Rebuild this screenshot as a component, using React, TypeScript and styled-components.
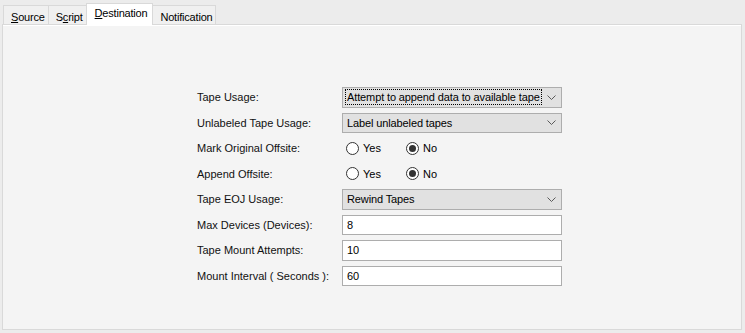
import React from "react";
import styled, { createGlobalStyle } from "styled-components";

const Global = createGlobalStyle`
  html, body { margin: 0; padding: 0; background: #ececec; }
  body { font-family: "Liberation Sans", Arial, sans-serif; font-size: 11px; color: #000; }
  * { box-sizing: border-box; }
`;

const Page = styled.div`
  width: 745px;
  height: 333px;
  padding: 3px 3px 3px 2px;
  display: flex;
  flex-direction: column;
  background: #ececec;
`;

const TabStrip = styled.div`
  display: flex;
  align-items: flex-end;
  height: 21px;
  padding-left: 1px;
  position: relative;
  z-index: 2;
`;

const Tab = styled.div<{ $active?: boolean }>`
  height: ${(p) => (p.$active ? "22px" : "19px")};
  margin-bottom: ${(p) => (p.$active ? "-1px" : "0")};
  padding: ${(p) => (p.$active ? "2px 5px 0 8px" : "4px 3px 0 7px")};
  border: 1px solid #d9d9d9;
  border-bottom: none;
  margin-left: -1px;
  background: ${(p) => (p.$active ? "#ffffff" : "#f0f0f0")};
  font-size: 11px;
  line-height: 14px;
  letter-spacing: -0.2px;
  white-space: nowrap;
  color: #000;
  &:first-child { margin-left: 0; }
`;

const Key = styled.span`
  text-decoration: underline;
  text-underline-offset: 1px;
`;

const Panel = styled.div`
  flex: 1;
  border: 1px solid #d9d9d9;
  background: #f4f4f4;
  box-shadow: inset 0 1px 0 #ffffff;
  padding: 62px 0 0 194px;
`;

const Form = styled.div`
  display: grid;
  grid-template-columns: 145px 220px;
  grid-auto-rows: 20.5px;
  row-gap: 5px;
  align-items: center;
`;

const Label = styled.div`
  font-size: 11px;
  color: #111;
  white-space: nowrap;
`;

const SelectBox = styled.div`
  height: 100%;
  display: flex;
  align-items: center;
  justify-content: space-between;
  padding: 0 4px 0 3px;
  background: #e1e1e1;
  border: 1px solid #adadad;
  font-size: 11px;
  color: #000;
`;

const SelectText = styled.span<{ $focus?: boolean }>`
  padding: 1px 1px;
  outline: ${(p) => (p.$focus ? "1px dotted #000" : "none")};
  letter-spacing: -0.12px;
  white-space: nowrap;
`;

const Chevron = styled.svg`
  width: 9px;
  height: 5px;
  margin-right: 1px;
  flex: none;
`;

const Input = styled.div`
  height: 100%;
  display: flex;
  align-items: center;
  padding: 0 4px;
  background: #ffffff;
  border: 1px solid #adadad;
  font-size: 11px;
  color: #000;
`;

const RadioGroup = styled.div`
  display: flex;
  align-items: center;
  padding-left: 4px;
`;

const RadioItem = styled.label`
  display: flex;
  align-items: center;
  gap: 4px;
  width: 60px;
  font-size: 11px;
  color: #000;
`;

const Circle = styled.span<{ $checked?: boolean }>`
  width: 13px;
  height: 13px;
  border-radius: 50%;
  border: 1px solid #333;
  background: #fff;
  display: flex;
  align-items: center;
  justify-content: center;
  &::after {
    content: "";
    width: 7px;
    height: 7px;
    border-radius: 50%;
    background: ${(p) => (p.$checked ? "#333" : "transparent")};
  }
`;

const Select = ({ value, focus }: { value: string; focus?: boolean }) => (
  <SelectBox>
    <SelectText $focus={focus}>{value}</SelectText>
    <Chevron viewBox="0 0 9 5">
      <path d="M0.5 0.5 L4.5 4.5 L8.5 0.5" fill="none" stroke="#5a5a5a" strokeWidth="1" />
    </Chevron>
  </SelectBox>
);

const Radio = ({ yes }: { yes: boolean }) => (
  <RadioGroup>
    <RadioItem>
      <Circle $checked={yes} />
      Yes
    </RadioItem>
    <RadioItem>
      <Circle $checked={!yes} />
      No
    </RadioItem>
  </RadioGroup>
);

export default function App() {
  return (
    <>
      <Global />
      <Page>
        <TabStrip>
          <Tab><Key>S</Key>ource</Tab>
          <Tab>S<Key>c</Key>ript</Tab>
          <Tab $active><Key>D</Key>estination</Tab>
          <Tab>Notification</Tab>
        </TabStrip>
        <Panel>
          <Form>
            <Label>Tape Usage:</Label>
            <Select value="Attempt to append data to available tape" focus />
            <Label>Unlabeled Tape Usage:</Label>
            <Select value="Label unlabeled tapes" />
            <Label>Mark Original Offsite:</Label>
            <Radio yes={false} />
            <Label>Append Offsite:</Label>
            <Radio yes={false} />
            <Label>Tape EOJ Usage:</Label>
            <Select value="Rewind Tapes" />
            <Label>Max Devices (Devices):</Label>
            <Input>8</Input>
            <Label>Tape Mount Attempts:</Label>
            <Input>10</Input>
            <Label>Mount Interval ( Seconds ):</Label>
            <Input>60</Input>
          </Form>
        </Panel>
      </Page>
    </>
  );
}
